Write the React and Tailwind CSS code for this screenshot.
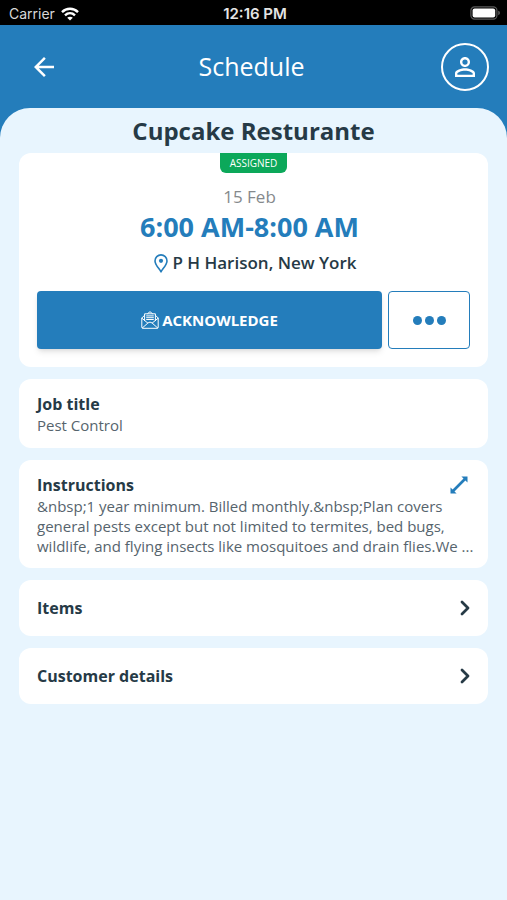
import { ChevronRight } from 'lucide-react';
import { MdArrowBack, MdPersonOutline } from 'react-icons/md';

const INSTRUCTIONS =
  '&nbsp;1 year minimum. Billed monthly.&nbsp;Plan covers general pests except but not limited to termites, bed bugs, wildlife, and flying insects like mosquitoes and drain flies.We ...';

function WifiIcon() {
  return (
    <svg width="18" height="14" viewBox="0 0 18 14" fill="none" stroke="white" strokeWidth="2.4">
      <path d="M1 5.1C5.5 0.6 12.5 0.6 17 5.1" />
      <path d="M4 8.3C6.9 5.5 11.1 5.5 14 8.3" />
      <path d="M9 13.6L6.2 10.8C7.8 9.3 10.2 9.3 11.8 10.8Z" fill="white" stroke="none" />
    </svg>
  );
}

function BatteryIcon() {
  return (
    <svg width="31" height="14" viewBox="0 0 31 14" fill="none">
      <rect x="0.9" y="0.9" width="26" height="12.2" rx="3.6" stroke="#5a5a5a" strokeWidth="1.2" />
      <rect x="2.6" y="2.6" width="22.6" height="8.8" rx="2" fill="white" />
      <path d="M28.3 4.8C30.3 5.3 30.3 8.7 28.3 9.2Z" fill="#6a6a6a" />
    </svg>
  );
}

function PinIcon() {
  return (
    <svg width="14" height="19" viewBox="0 0 14 19" fill="none">
      <path
        d="M7 17.8C5.2 14.6 1 10.6 1 6.9A6 6 0 0 1 13 6.9C13 10.6 8.8 14.6 7 17.8Z"
        stroke="#247dbb"
        strokeWidth="1.6"
        strokeLinejoin="round"
      />
      <circle cx="7" cy="6.8" r="2.1" fill="#247dbb" />
    </svg>
  );
}

function OpenMailIcon() {
  return (
    <svg width="18" height="18" viewBox="0 0 18 18" fill="none" stroke="white" strokeWidth="1" strokeLinejoin="round" strokeLinecap="round">
      <path d="M3.6 4.3L0.8 7V16.2C0.8 16.9 1.2 17.3 1.9 17.3H16.1C16.8 17.3 17.2 16.9 17.2 16.2V7L14.4 4.3" />
      <path d="M6.6 2.6L9 0.7L11.4 2.6" />
      <path d="M3.6 9.6V2.8H14.4V9.6" />
      <path d="M5.6 4.9H12.4M5.6 6.7H12.4M5.6 8.5H12.4" />
      <path d="M0.9 7.2L6.8 12.1M17.1 7.2L11.2 12.1" />
      <path d="M1.3 17L6.8 12.1C8.2 10.9 9.8 10.9 11.2 12.1L16.7 17" />
    </svg>
  );
}

function ExpandIcon() {
  return (
    <svg width="18" height="18" viewBox="0 0 18 18" fill="#247dbb">
      <path d="M11.4 0.5H17.5V6.6L15.4 4.5L4.5 15.4L6.6 17.5H0.5V11.4L2.6 13.5L13.5 2.6Z" />
    </svg>
  );
}

function LinkCard({ label }) {
  return (
    <button className="flex h-14 w-full items-center justify-between rounded-xl bg-white pr-[11px] pl-[18px] text-left">
      <span className="text-base font-bold">{label}</span>
      <ChevronRight size={24} strokeWidth={2.8} />
    </button>
  );
}

export default function App() {
  return (
    <div className="flex min-h-screen flex-col bg-[#e8f5fe] font-['Open_Sans',sans-serif] text-[#263a46]">
      {/* Status bar */}
      <div className="flex h-[25px] items-center bg-black pr-[6px] pl-[9px] font-['Inter',sans-serif] text-sm text-white">
        <div className="flex flex-1 items-center gap-[6px] pt-[2px]">
          <span className="text-[#d8d8d8]">Carrier</span>
          <WifiIcon />
        </div>
        <span className="pt-[2px] text-[15px] font-semibold text-[#e4e4e4]">12:16 PM</span>
        <div className="flex flex-1 justify-end">
          <BatteryIcon />
        </div>
      </div>

      <div className="flex flex-1 flex-col bg-linear-to-b from-[#247dbb] from-50% to-[#e8f5fe] to-50%">
        <header className="flex h-[83px] items-center justify-between bg-[#247dbb] pr-[18px] pl-[26px] text-white">
          <button aria-label="Back" className="flex h-12 w-9 items-center justify-center">
            <MdArrowBack size={30} />
          </button>
          <h1 className="text-[25px]">Schedule</h1>
          <button
            aria-label="Profile"
            className="flex size-12 items-center justify-center rounded-full border-2 border-white"
          >
            <MdPersonOutline size={30} />
          </button>
        </header>

        <main className="flex flex-1 flex-col gap-3 rounded-t-[30px] bg-[#e8f5fe] px-[19px]">
          <section>
            <h2 className="py-[6px] text-center text-2xl leading-[33px] font-bold">Cupcake Resturante</h2>
            <div className="flex flex-col items-center rounded-xl bg-white px-[18px] pb-[18px]">
              <span className="rounded-b-md bg-[#0ca85a] px-[10px] text-[10px] leading-5 text-white">ASSIGNED</span>
              <div className="mt-3 pr-2 text-center">
                <p className="text-[17px] leading-6 text-[#85898c]">15 Feb</p>
                <p className="text-[27px] leading-9 font-bold text-[#247dbb]">6:00 AM-8:00 AM</p>
              </div>
              <p className="mt-1 flex items-center gap-1 pl-1 text-[17px] leading-7 font-semibold">
                <PinIcon />
                P H Harison, New York
              </p>
              <div className="mt-[14px] flex w-full items-center gap-[6px]">
                <button className="flex h-[58px] flex-1 items-center justify-center gap-[3px] rounded bg-[#247dbb] text-[15px] font-bold text-white shadow-md">
                  <OpenMailIcon />
                  ACKNOWLEDGE
                </button>
                <button
                  aria-label="More actions"
                  className="flex h-[58px] w-[82px] items-center justify-center gap-[3px] rounded border border-[#247dbb]"
                >
                  <span className="size-[9px] rounded-full bg-[#247dbb]" />
                  <span className="size-[9px] rounded-full bg-[#247dbb]" />
                  <span className="size-[9px] rounded-full bg-[#247dbb]" />
                </button>
              </div>
            </div>
          </section>

          <section className="rounded-xl bg-white px-[18px] pt-[14px] pb-[13px]">
            <h3 className="text-base leading-[22px] font-bold">Job title</h3>
            <p className="text-[15px] leading-5 text-[#56646d]">Pest Control</p>
          </section>

          <section className="rounded-xl bg-white pt-[14px] pr-2 pb-3 pl-[18px]">
            <div className="flex items-center justify-between pr-3">
              <h3 className="text-base leading-[22px] font-bold">Instructions</h3>
              <button aria-label="Expand instructions">
                <ExpandIcon />
              </button>
            </div>
            <p className="text-[15px] leading-5 text-[#56646d]">{INSTRUCTIONS}</p>
          </section>

          <LinkCard label="Items" />
          <LinkCard label="Customer details" />
        </main>
      </div>
    </div>
  );
}
